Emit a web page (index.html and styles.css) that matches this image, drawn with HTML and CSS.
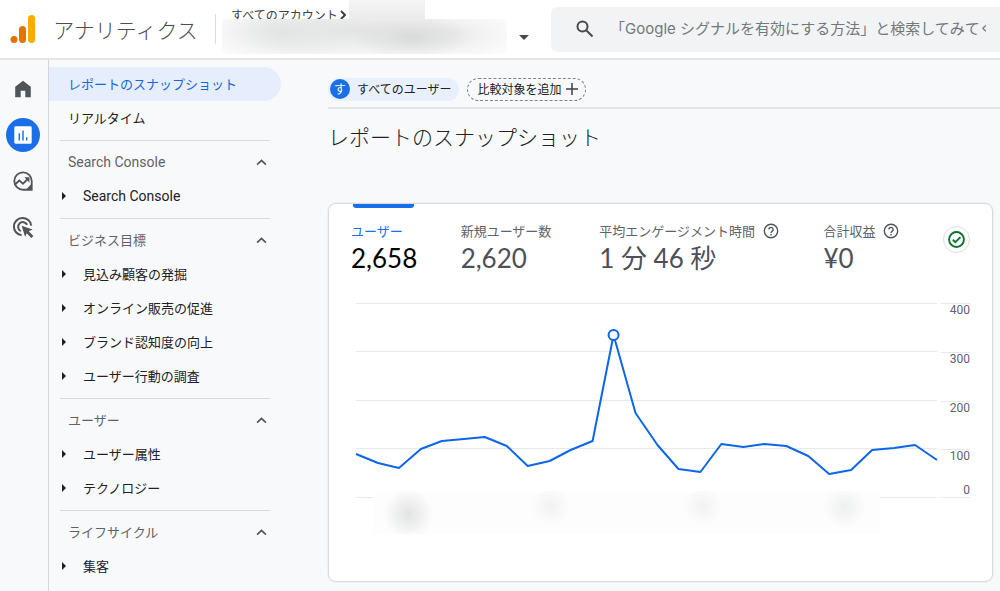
FILE: index.html
```html
<!DOCTYPE html>
<html lang="ja">
<head>
<meta charset="utf-8">
<meta name="viewport" content="width=device-width, initial-scale=1">
<title>アナリティクス</title>
<link rel="stylesheet" href="styles.css">
</head>
<body>
<header class="topbar">
  <a class="brand" href="#">
    <svg class="brand-logo" viewBox="0 0 26 30" aria-hidden="true">
      <rect x="18" y="1" width="7" height="28" rx="3.5" fill="#f9ab00"/>
      <rect x="9" y="12" width="7" height="17" rx="3.5" fill="#e37400"/>
      <circle cx="4" cy="25.500" r="3.500" fill="#e37400"/>
    </svg>
    <span>アナリティクス</span>
  </a>
  <button class="account" type="button" aria-label="アカウントを選択">
    <span class="account-path">すべてのアカウント
      <svg class="account-chevron" viewBox="0 0 8 10" aria-hidden="true"><path d="M2 1l4 4-4 4"/></svg>
    </span>
    <span class="redacted redacted-id"></span>
    <span class="redacted redacted-name"></span>
    <svg class="account-caret" viewBox="0 0 10 5" aria-hidden="true"><path d="M0 0h10L5 5z"/></svg>
  </button>
  <label class="search">
    <svg viewBox="0 0 18 18" aria-hidden="true"><circle cx="6.500" cy="6.500" r="5"/><path d="M10.500 10.500l6 6"/></svg>
    <input type="search" aria-label="検索" placeholder="「Google シグナルを有効にする方法」と検索してみてください">
  </label>
</header>

<div class="shell">
  <nav class="rail" aria-label="メイン">
    <a href="#" aria-label="ホーム"><svg viewBox="0 0 24 24"><path fill="#50555a" d="M3.500 9.500L12 3l8.500 6.500V21h-6v-7h-5v7h-6z"/></svg></a>
    <a href="#" class="rail-active" aria-label="レポート"><svg viewBox="0 0 24 24"><rect x="2.500" y="2.500" width="19" height="19" rx="1.500" fill="#fff"/><path d="M8 10v8M12 7v11M16 14.500V18" stroke="#1a73e8" stroke-width="1.600"/></svg></a>
    <a href="#" aria-label="探索"><svg viewBox="0 0 24 24" fill="none" stroke="#50555a" stroke-width="2"><path d="M21.500 12v9.500H12A9.500 9.500 0 1 1 21.500 12z"/><path d="M21.500 15v6.500H15z" fill="#50555a" stroke="none"/><path d="M3.500 15.500l4.500-4 4 3.500 6-6"/><path d="M13.500 8h5.500v5.500z" fill="#50555a" stroke="none"/></svg></a>
    <a href="#" aria-label="広告"><svg viewBox="0 0 24 24" fill="none" stroke="#50555a" stroke-width="2.200"><path d="M10.500 21A9.500 9.500 0 1 1 21 10.500"/><path d="M9.500 16.500A5.200 5.200 0 1 1 16.500 9.500"/><path d="M10.500 10.500l12 4.200-4.200 2 5 5-2.200 2.200-5-5-1.800 3.800z" fill="#50555a" stroke="none"/></svg></a>
  </nav>

  <nav class="sidebar" aria-label="レポート">
    <a class="side-link side-current" href="#">レポートのスナップショット</a>
    <a class="side-link" href="#">リアルタイム</a>
    <section class="group">
      <button class="group-head latin" type="button">Search Console<svg viewBox="0 0 10 6"><path d="M1 5l4-4 4 4"/></svg></button>
      <a class="group-item latin" href="#">Search Console</a>
    </section>
    <section class="group">
      <button class="group-head" type="button">ビジネス目標<svg viewBox="0 0 10 6"><path d="M1 5l4-4 4 4"/></svg></button>
      <a class="group-item" href="#">見込み顧客の発掘</a>
      <a class="group-item" href="#">オンライン販売の促進</a>
      <a class="group-item" href="#">ブランド認知度の向上</a>
      <a class="group-item" href="#">ユーザー行動の調査</a>
    </section>
    <section class="group">
      <button class="group-head" type="button">ユーザー<svg viewBox="0 0 10 6"><path d="M1 5l4-4 4 4"/></svg></button>
      <a class="group-item" href="#">ユーザー属性</a>
      <a class="group-item" href="#">テクノロジー</a>
    </section>
    <section class="group">
      <button class="group-head" type="button">ライフサイクル<svg viewBox="0 0 10 6"><path d="M1 5l4-4 4 4"/></svg></button>
      <a class="group-item" href="#">集客</a>
    </section>
  </nav>

  <main class="content">
    <div class="chips">
      <button class="chip" type="button"><span class="chip-badge">す</span>すべてのユーザー</button>
      <button class="chip chip-add" type="button">比較対象を追加<svg viewBox="0 0 12 12"><path d="M6 0v12M0 6h12"/></svg></button>
    </div>
    <h1>レポートのスナップショット</h1>
    <section class="card">
      <div class="metrics">
        <button class="metric metric-current" type="button"><span class="metric-label">ユーザー</span><span class="metric-value">2,658</span></button>
        <button class="metric" type="button"><span class="metric-label">新規ユーザー数</span><span class="metric-value">2,620</span></button>
        <button class="metric" type="button"><span class="metric-label">平均エンゲージメント時間<svg viewBox="0 0 16 16"><circle cx="8" cy="8" r="6.700"/><path d="M5.900 6.500a2.100 2.100 0 1 1 3.400 1.600C8.500 8.700 8 9 8 10M8 11v1.500"/></svg></span><span class="metric-value">1 分 46 秒</span></button>
        <button class="metric" type="button"><span class="metric-label">合計収益<svg viewBox="0 0 16 16"><circle cx="8" cy="8" r="6.700"/><path d="M5.900 6.500a2.100 2.100 0 1 1 3.400 1.600C8.500 8.700 8 9 8 10M8 11v1.500"/></svg></span><span class="metric-value">¥0</span></button>
        <button class="status" type="button" aria-label="データの状態"><svg viewBox="0 0 16 16"><circle cx="8" cy="8" r="7"/><path d="M4.500 8.200l2.400 2.400 4.800-4.900"/></svg></button>
      </div>
      <div class="chart">
        <svg class="plot" viewBox="0 0 582 195" preserveAspectRatio="none" role="img" aria-label="ユーザー数の推移">
          <path class="grid-line" d="M0 .5H582M0 48.500H582M0 97.500H582M0 145.500H582M0 194.500H582"/>
          <path class="series" d="M0 151L22 160L43 165L65 146L86 138L108 136L129 134L151 143L172 163L194 158L215 147L237 138L258 32L280 110L302 142L323 166L345 169L366 141L388 144L409 141L431 143L453 153L474 171L496 167L517 147L539 145L560 142L582 157"/>
          <circle class="peak" cx="258" cy="32" r="5"/>
        </svg>
        <div class="axis"><span>400</span><span>300</span><span>200</span><span class="axis-last">100<b>0</b></span></div>
        <div class="redacted redacted-dates"></div>
      </div>
    </section>
  </main>
</div>
</body>
</html>
```
FILE: styles.css
```css
* { box-sizing: border-box; }
body {
  margin: 0;
  min-height: 100vh;
  display: flex;
  flex-direction: column;
  background: #f8f9fb;
  color: #202124;
  font: 13px/20px "Noto Sans CJK JP", sans-serif;
  font-weight: 400;
  overflow-x: hidden;
}
a { color: inherit; text-decoration: none; }
button { border: 0; padding: 0; background: none; color: inherit; font: inherit; text-align: left; }
svg { display: block; flex: none; }

.topbar { display: flex; height: 60px; background: #fff; border-bottom: 2px solid #e4e6e9; }
.brand {
  display: flex;
  align-items: center;
  justify-content: space-between;
  width: 216px;
  flex: none;
  padding-left: 10px;
  font-size: 21px;
  font-weight: 300;
  color: #4a4e52;
  white-space: nowrap;
}
.brand::after { content: ""; width: 1px; height: 30px; background: #dadce0; }
.brand-logo { width: 26px; height: 30px; }
.account { position: relative; width: 335px; flex: none; padding: 5px 0 0 15px; display: flex; align-items: flex-start; align-self: stretch; }
.account-path { display: flex; align-items: center; gap: 1px; font-size: 12px; color: #3c4043; }
.account-chevron { width: 8px; height: 10px; fill: none; stroke: #3c4043; stroke-width: 2; }
.account-caret { width: 10px; height: 5px; fill: #45494d; position: absolute; left: 303px; top: 35px; }

.redacted { position: absolute; }
.redacted-name {
  left: 6px; top: 19px; width: 285px; height: 35px;
  background:
    radial-gradient(ellipse 60px 22px at 190px 18px, #d9dada, #e2e2e200),
    radial-gradient(ellipse 75px 30px at 60px 13px, #e2e3e3, #f4f4f400),
    radial-gradient(ellipse 110px 32px at 130px 11px, #e2e3e3, #f4f4f400),
    radial-gradient(ellipse 65px 26px at 230px 15px, #ebebeb, #f8f8f800),
    #fbfbfb;
}
.redacted-id { left: 133px; top: 0; width: 76px; height: 35px; background: linear-gradient(#f5f5f5, #e2e2e2); }
.redacted-dates {
  left: 22px; right: 90px; top: 188px; height: 43px;
  background:
    radial-gradient(circle 25px at 7% 23px, #e2e3e3, #fdfdfd00),
    radial-gradient(circle 20px at 35% 15px, #f2f2f2, #fdfdfd00),
    radial-gradient(circle 20px at 65% 15px, #f2f2f2, #fdfdfd00),
    radial-gradient(circle 21px at 93% 16px, #eeefef, #fdfdfd00),
    #fdfdfd;
}

.search { flex: 1; min-width: 0; margin: 7px 0 6px; padding: 0 0 2px 25px; display: flex; align-items: center; gap: 16px; background: #f1f3f4; border-radius: 6px 0 0 6px; }
.search svg { width: 18px; height: 18px; fill: none; stroke: #45494d; stroke-width: 2; }
.search input { flex: 1; min-width: 0; border: 0; padding: 0; background: none; outline: 0; font: 15px/24px Inter, "Noto Sans CJK JP", sans-serif; color: #202124; }
.search input::placeholder { color: #73787d; opacity: 1; }

.shell { flex: 1; display: flex; }
.rail { width: 49px; flex: none; border-right: 1px solid #d3d5d8; padding: 12px 0 0 6px; display: flex; flex-direction: column; gap: 12px; }
.rail a { width: 34px; height: 34px; display: grid; place-items: center; border-radius: 50%; }
.rail svg { width: 22px; height: 22px; }
.rail .rail-active { background: #1a6fe8; }

.sidebar { width: 232px; flex: none; padding-top: 7px; }
.side-link { display: flex; align-items: center; height: 34px; padding: 0 0 1px 19px; }
.side-current { background: #e6edfd; color: #1967d2; border-radius: 0 17px 17px 0; }
.group { margin: 0 11px; border-top: 1px solid #d8dadd; padding: 4px 0 5px; }
.side-link + .group { margin-top: 5px; }
.group-head { display: flex; align-items: center; justify-content: space-between; width: 100%; height: 34px; padding: 0 3px 0 8px; color: #5f6368; }
.group-head svg { width: 11px; height: 7px; fill: none; stroke: #50555a; stroke-width: 1.500; }
.group-item { display: flex; align-items: center; gap: 17px; height: 34px; padding-left: 2px; }
.group-item::before { content: ""; border: 4px solid transparent; border-left-color: #202124; border-right: 0; }
.latin { font-family: Roboto, sans-serif; font-size: 14px; }

.content { flex: 1; min-width: 0; padding: 18px 0 9px 47px; display: flex; flex-direction: column; }
.chips { display: flex; gap: 8px; padding-bottom: 6px; border-bottom: 2px solid #e1e3e6; }
.chip { display: flex; align-items: center; gap: 7px; height: 23px; padding: 0 8px 1px 2px; border-radius: 12px; background: #e8f0fe; font-size: 12px; }
.chip-badge { width: 20px; height: 20px; border-radius: 50%; background: #1a6fe8; color: #fff; text-align: center; }
.chip-add { background: none; border: 1px dashed #80868b; gap: 5px; padding: 0 7px 1px 9px; }
.chip-add svg { width: 12px; height: 12px; stroke: #3c4043; stroke-width: 1.500; }
h1 { margin: 12px 0 52px; font-size: 21px; line-height: 30px; font-weight: 300; }

.card { flex: 1; margin-right: 7px; padding: 0 22px; background: #fff; border: 1px solid #d9dbdf; border-radius: 8px; box-shadow: 0 0 0 1px #eff0f2; }
.metrics { display: grid; grid-template-columns: 110fr 139fr 225fr 120fr 27px; align-items: start; }
.metric { position: relative; display: flex; flex-direction: column; padding-top: 17px; color: #4d5156; }
.metric-label { display: flex; align-items: center; gap: 8px; white-space: nowrap; color: #5f6368; }
.metric-label svg { width: 16px; height: 16px; fill: none; stroke: #50555a; stroke-width: 1.400; }
.metric-value { font: 26px/34px Lato, "Noto Sans CJK JP", sans-serif; white-space: nowrap; }
.metric-current { color: #000; }
.metric-current .metric-label { color: #1a6fe8; }
.metric-current::before { content: ""; position: absolute; top: 0; left: 2px; width: 61px; height: 4px; background: #1a6fe8; border-radius: 0 0 3px 3px; }
.status { width: 27px; height: 27px; margin-top: 22px; border: 1px solid #dadce0; border-radius: 50%; display: grid; place-items: center; }
.status svg { width: 17px; height: 17px; fill: none; stroke: #137333; stroke-width: 1.800; }

.chart { position: relative; display: flex; gap: 4px; margin-top: 28px; padding: 0 0 0 5px; }
.plot { flex: 1; min-width: 0; height: 195px; overflow: visible; }
.grid-line { fill: none; stroke: #e8e9eb; stroke-width: 1; }
.series { fill: none; stroke: #0b66e8; stroke-width: 2; stroke-linejoin: round; }
.peak { fill: #fff; stroke: #0b66e8; stroke-width: 2; }
.axis { width: 29px; height: 195px; flex: none; display: grid; grid-template-rows: repeat(4, 1fr); font: 12px/13px Roboto, sans-serif; color: #5f6368; text-align: right; }
.axis span { border-top: 1px solid #e8e9eb; }
.axis .axis-last { border-bottom: 1px solid #e8e9eb; display: flex; flex-direction: column; justify-content: space-between; }
.axis b { font-weight: 400; }
```
